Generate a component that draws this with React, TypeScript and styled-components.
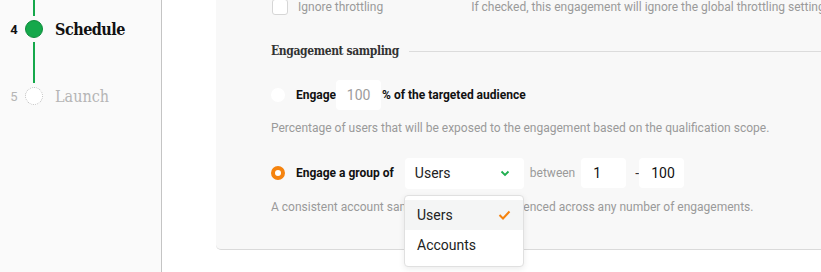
import styled, { createGlobalStyle } from "styled-components";

const Global = createGlobalStyle`
  html, body { margin: 0; padding: 0; background: #fff; overflow: hidden; }
  body { font-family: Roboto, "Liberation Sans", sans-serif; }
`;

const Page = styled.div`
  display: flex;
  width: 821px;
  height: 272px;
  overflow: hidden;
`;

const Sidebar = styled.div`
  width: 161px;
  flex-shrink: 0;
  background: #fafafa;
  border-right: 1px solid #c4c4c4;
`;

const StepList = styled.div`
  display: flex;
  flex-direction: column;
`;

const Step = styled.div<{ active?: boolean }>`
  display: grid;
  grid-template-columns: 25px 18px 1fr;
  align-items: center;
  height: 26px;
  color: ${({ active }) => (active ? "#111" : "#b5b5b5")};
`;

const StepNum = styled.span<{ active?: boolean }>`
  font-size: 13px;
  font-weight: ${({ active }) => (active ? 700 : 400)};
  text-align: center;
  padding-left: 3px;
`;

const Dot = styled.span<{ active?: boolean }>`
  width: 18px;
  height: 18px;
  box-sizing: border-box;
  border-radius: 50%;
  background: ${({ active }) => (active ? "#15a84b" : "#fff")};
  border: ${({ active }) => (active ? "1px solid #0e8c3c" : "1.5px dotted #bdbdbd")};
`;

const StepLabel = styled.span<{ active?: boolean }>`
  font-family: "DejaVu Serif", "Liberation Serif", serif;
  font-stretch: condensed;
  font-size: 16px;
  letter-spacing: ${({ active }) => (active ? "-0.5px" : "0px")};
  font-weight: ${({ active }) => (active ? 700 : 400)};
  padding-left: 12px;
`;

const Rail = styled.div<{ h: number }>`
  width: 1.5px;
  height: ${({ h }) => h}px;
  background: #15a84b;
  margin-left: 33px;
`;

const Main = styled.div`
  flex: 1;
  padding-left: 54px;
  overflow: hidden;
`;

const Card = styled.div`
  width: 700px;
  height: 253px;
  box-sizing: border-box;
  background: #f8f8f8;
  border-bottom: 1px solid #dadada;
  border-bottom-left-radius: 5px;
  padding-left: 55px;
  position: relative;
`;

const ThrottleRow = styled.div`
  display: flex;
  align-items: center;
  margin-top: -3px;
  height: 20px;
  white-space: nowrap;
`;

const Checkbox = styled.span`
  width: 14px;
  height: 14px;
  background: #fff;
  border: 1px solid #d6d6d6;
  border-radius: 3px;
  margin-left: 1px;
`;

const Muted = styled.span<{ size?: number }>`
  color: #9a9a9a;
  font-size: ${({ size }) => size ?? 12}px;
`;

const Hint = styled(Muted)`
  margin-left: 88px;
`;

const SectionTitle = styled.div`
  display: flex;
  align-items: center;
  gap: 10px;
  margin-top: 24px;
  height: 20px;
  font-family: "DejaVu Serif", "Liberation Serif", serif;
  font-stretch: condensed;
  font-weight: 700;
  font-size: 12px;
  letter-spacing: -0.4px;
  color: #333;
  white-space: nowrap;

  &::after {
    content: "";
    flex: 1;
    height: 1px;
    background: #dcdcdc;
  }
`;

const OptionRow = styled.div<{ top: number }>`
  display: flex;
  align-items: center;
  margin-top: ${({ top }) => top}px;
  height: 30px;
  white-space: nowrap;
  font-size: 12px;
`;

const Radio = styled.span<{ checked?: boolean }>`
  width: 14px;
  height: 14px;
  box-sizing: border-box;
  border-radius: 50%;
  background: #fff;
  border: ${({ checked }) => (checked ? "4px solid #f5830e" : "none")};
  margin-right: 11px;
`;

const Bold = styled.span`
  font-weight: 700;
  color: #111;
`;

const NumBox = styled.span<{ w: number; dim?: boolean }>`
  display: inline-flex;
  align-items: center;
  justify-content: ${({ dim }) => (dim ? "center" : "flex-start")};
  width: ${({ w }) => w}px;
  height: 30px;
  box-sizing: border-box;
  padding-left: ${({ dim }) => (dim ? 0 : 12)}px;
  background: #fff;
  border-radius: 4px;
  font-size: 14px;
  color: ${({ dim }) => (dim ? "#9c9c9c" : "#111")};
`;

const Select = styled.span`
  display: inline-flex;
  align-items: center;
  justify-content: space-between;
  width: 119px;
  height: 31px;
  box-sizing: border-box;
  padding: 0 14px 0 10px;
  background: #fff;
  border-radius: 4px;
  font-size: 14px;
  color: #222;
  margin-left: 11px;
`;

const Dash = styled.span`
  margin-left: 9px;
  font-size: 14px;
  color: #333;
  width: 4px;
`;

const Description = styled(Muted)<{ gap: number }>`
  display: block;
  margin-top: ${({ gap }) => gap}px;
  line-height: 14px;
`;

const Menu = styled.div`
  position: absolute;
  left: 188px;
  top: 198px;
  width: 120px;
  box-sizing: border-box;
  padding: 4px 0 6px;
  background: #fff;
  border: 1px solid #e0e0e0;
  border-radius: 4px;
  box-shadow: 0 2px 6px rgba(0, 0, 0, 0.08);
`;

const MenuItem = styled.div<{ selected?: boolean }>`
  display: flex;
  align-items: center;
  justify-content: space-between;
  height: 30px;
  padding: 0 12px;
  font-size: 14px;
  color: #222;
  background: ${({ selected }) => (selected ? "#f4f5f5" : "transparent")};
`;

const Chevron = ({ color }: { color: string }) => (
  <svg width="10" height="7" viewBox="0 0 10 7">
    <path d="M1.5 1.5 L5 5 L8.5 1.5" fill="none" stroke={color} strokeWidth="1.8" />
  </svg>
);

const Check = () => (
  <svg width="13" height="10" viewBox="0 0 13 10">
    <path d="M1.5 5 L5 8.5 L11.5 1.5" fill="none" stroke="#f5830e" strokeWidth="2" />
  </svg>
);

export default function App() {
  return (
    <>
      <Global />
      <Page>
        <Sidebar>
          <StepList>
            <Rail h={16} />
            <Step active>
              <StepNum active>4</StepNum>
              <Dot active />
              <StepLabel active>Schedule</StepLabel>
            </Step>
            <Rail h={41} />
            <Step>
              <StepNum>5</StepNum>
              <Dot />
              <StepLabel>Launch</StepLabel>
            </Step>
          </StepList>
        </Sidebar>
        <Main>
          <Card>
            <ThrottleRow>
              <Checkbox />
              <Muted size={12} style={{ marginLeft: 10 }}>Ignore throttling</Muted>
              <Hint size={12}>If checked, this engagement will ignore the global throttling settings</Hint>
            </ThrottleRow>
            <SectionTitle>Engagement sampling</SectionTitle>
            <OptionRow top={19}>
              <Radio />
              <Bold>Engage</Bold>
              <NumBox w={45} dim style={{ marginRight: 1 }}>100</NumBox>
              <Bold>% of the targeted audience</Bold>
            </OptionRow>
            <Description gap={11}>
              Percentage of users that will be exposed to the engagement based on the qualification scope.
            </Description>
            <OptionRow top={23}>
              <Radio checked />
              <Bold>Engage a group of</Bold>
              <Select>
                Users
                <Chevron color="#1fae4f" />
              </Select>
              <Muted size={12} style={{ margin: "0 6px" }}>between</Muted>
              <NumBox w={45}>1</NumBox>
              <Dash>-</Dash>
              <NumBox w={45}>100</NumBox>
            </OptionRow>
            <Description gap={12}>
              A consistent account sample will be cross-referenced across any number of engagements.
            </Description>
            <Menu>
              <MenuItem selected>
                Users
                <Check />
              </MenuItem>
              <MenuItem>Accounts</MenuItem>
            </Menu>
          </Card>
        </Main>
      </Page>
    </>
  );
}
